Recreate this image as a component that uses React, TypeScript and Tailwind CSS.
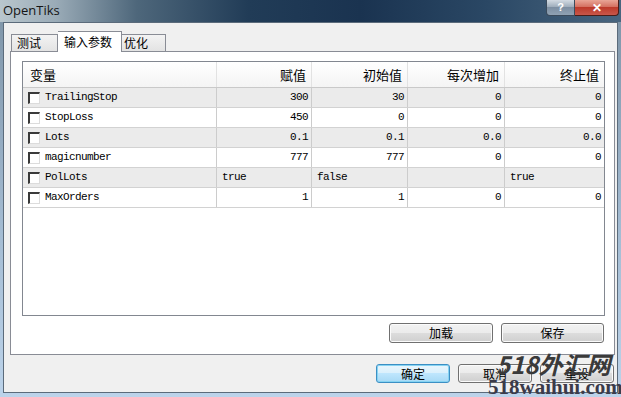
const cjk = "font-['Noto_Sans_CJK_SC','Noto_Sans',sans-serif]";
const mono = "font-['Liberation_Mono','DejaVu_Sans_Mono',monospace]";

type Row = { name: string; vals: string[]; text?: boolean };

const rows: Row[] = [
  { name: 'TrailingStop', vals: ['300', '30', '0', '0'] },
  { name: 'StopLoss', vals: ['450', '0', '0', '0'] },
  { name: 'Lots', vals: ['0.1', '0.1', '0.0', '0.0'] },
  { name: 'magicnumber', vals: ['777', '777', '0', '0'] },
  { name: 'PolLots', vals: ['true', 'false', '', 'true'], text: true },
  { name: 'MaxOrders', vals: ['1', '1', '0', '0'] },
];

const headers = ['赋值', '初始值', '每次增加', '终止值'];

function WinButton({ label, primary, className = '' }: { label: string; primary?: boolean; className?: string }) {
  return (
    <button
      className={
        primary
          ? `flex items-center justify-center rounded-[3px] border border-[#3c8fc4] bg-[linear-gradient(#eaf6fd_0%,#d9f0fc_50%,#bee6fd_50%,#a7d9f5_100%)] shadow-[inset_0_0_0_1px_#86d3f2] text-[12px] leading-none text-black ${cjk} ${className}`
          : `flex items-center justify-center rounded-[3px] border border-[#707070] bg-[linear-gradient(#f2f2f2_0%,#ebebeb_50%,#dddddd_50%,#cfcfcf_100%)] shadow-[inset_0_0_0_1px_#fbfbfb] text-[12px] leading-none text-black ${cjk} ${className}`
      }
    >
      {label}
    </button>
  );
}

function Checkbox() {
  return (
    <span className="block h-[12px] w-[12px] shrink-0 border-t-2 border-l-2 border-r border-b border-t-[#3a3a3a] border-l-[#3a3a3a] border-r-[#dcdcdc] border-b-[#dcdcdc] bg-white" />
  );
}

export default function App() {
  return (
    <div className="relative flex h-[397px] w-[621px] flex-col overflow-hidden bg-[linear-gradient(#7d93a6,#a5bdd4_60%,#bcd3ea)]">
      {/* 标题栏 */}
      <div className="flex h-[22px] shrink-0 items-start justify-between bg-[linear-gradient(90deg,#b9c6cd_0%,#9aabb7_9%,#4e677b_22%,#213c57_40%,#1a3350_58%,#2a4764_78%,#48657f_100%)]">
        <span className="pl-[3px] pt-[2px] text-[13px] leading-[16px] text-[#151515] font-['Open_Sans','Noto_Sans',sans-serif]">
          OpenTiks
        </span>
        <div className="mr-[2px] flex">
          <div className="flex h-[16px] w-[29px] items-center justify-center rounded-bl-[4px] border border-t-0 border-[#3b4b5c] bg-[linear-gradient(#d3dbe3,#9aa9b8_50%,#7d8fa2_50%,#90a2b4)] text-[11px] font-bold leading-none text-white font-['Liberation_Sans',sans-serif]">
            ?
          </div>
          <div className="flex h-[16px] w-[44px] items-center justify-center rounded-br-[4px] border border-t-0 border-l-0 border-[#4a1d18] bg-[linear-gradient(#e9a596,#d26b5b_50%,#bd3a2a_50%,#c8574a)] text-[12px] font-bold leading-none text-white font-['Liberation_Sans',sans-serif]">
            ✕
          </div>
        </div>
      </div>

      {/* 窗口主体 */}
      <div className="mx-[3px] flex h-[371px] flex-col border border-[#5b6b7b] bg-[#f0f0f0]">
        {/* 选项卡 */}
        <div className={`relative z-10 ml-[7px] mt-[8px] flex h-[20px] items-end text-[12px] text-black ${cjk}`}>
          <div className="flex h-[17px] w-[47px] items-center border border-b-0 border-[#898c95] bg-[linear-gradient(#f3f3f3,#e3e3e3)] pl-[5px] leading-none">
            测试
          </div>
          <div className="-mb-px flex h-[21px] w-[64px] items-center border border-b-0 border-l-0 border-[#898c95] bg-white pl-[6px] leading-none">
            输入参数
          </div>
          <div className="flex h-[17px] w-[44px] items-center border border-b-0 border-l-0 border-[#898c95] bg-[linear-gradient(#f3f3f3,#e3e3e3)] pl-[2px] leading-none">
            优化
          </div>
        </div>

        {/* 面板 */}
        <div className="ml-[6px] mr-[2px] flex h-[304px] flex-col border border-[#898c95] bg-white pl-[11px] pr-[9px] pt-[9px]">
          <div className="h-[255px] w-[583px] border border-[#828790] bg-white">
            <div className={`grid h-[26px] grid-cols-[194px_95px_96px_97px_99px] border-b border-[#c9c9c9] bg-[linear-gradient(#ffffff,#f4f4f4)] text-[13px] text-black ${cjk}`}>
              <div className="flex items-center border-r border-[#e2e2e2] pl-[7px]">变量</div>
              {headers.map((h, i) => (
                <div
                  key={h}
                  className={`flex items-center justify-end pr-[5px] ${i < 3 ? 'border-r border-[#e2e2e2]' : ''}`}
                >
                  {h}
                </div>
              ))}
            </div>
            {rows.map((r, ri) => (
              <div
                key={r.name}
                className={`grid h-[20px] grid-cols-[194px_95px_96px_97px_99px] border-b border-[#d2d2d2] text-[11px] tracking-[-0.6px] text-black ${mono} ${
                  ri % 2 === 0 ? 'bg-[#ebebeb]' : 'bg-white'
                }`}
              >
                <div className="flex items-center gap-[5px] border-r border-[#cccccc] pl-[5px]">
                  <Checkbox />
                  <span>{r.name}</span>
                </div>
                {r.vals.map((v, i) => (
                  <div
                    key={i}
                    className={`flex items-center ${r.text ? 'justify-start pl-[5px]' : 'justify-end pr-[3px]'} ${
                      i < 3 ? 'border-r border-[#cccccc]' : ''
                    }`}
                  >
                    {v}
                  </div>
                ))}
              </div>
            ))}
          </div>

          <div className="mt-[7px] flex justify-end gap-[8px] pr-[1px]">
            <WinButton label="加载" className="h-[20px] w-[104px]" />
            <WinButton label="保存" className="h-[20px] w-[103px]" />
          </div>
        </div>

        {/* 底部按钮 */}
        <div className="mt-[9px] flex justify-end gap-[8px] pr-[3px]">
          <WinButton label="确定" primary className="h-[19px] w-[74px]" />
          <WinButton label="取消" className="h-[19px] w-[74px]" />
          <WinButton label="重设" className="h-[19px] w-[74px]" />
        </div>
      </div>

      {/* 水印 */}
      <div className={`pointer-events-none absolute left-[496px] top-[352px] whitespace-nowrap text-[24px] font-bold italic leading-none text-[#3a3a3a] ${cjk}`}>
        518外汇网
      </div>
      <div className="pointer-events-none absolute left-[488px] top-[377px] whitespace-nowrap text-[21px] font-bold leading-none text-[#3b3b4a] font-['Liberation_Serif',serif]">
        518waihui.com
      </div>
    </div>
  );
}
